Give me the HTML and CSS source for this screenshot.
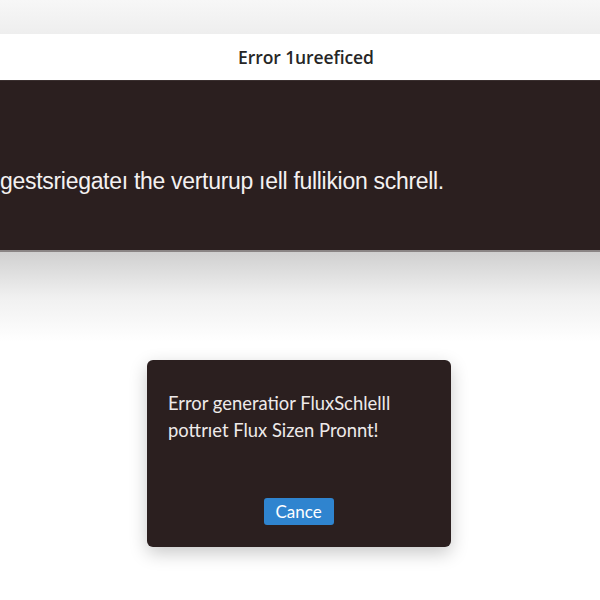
FILE: index.html
```html
<!DOCTYPE html>
<html lang="en">
<head>
  <meta charset="UTF-8">
  <meta name="viewport" content="width=device-width, initial-scale=1">
  <title>Error 1ureeficed</title>
  <link rel="stylesheet" href="styles.css">
</head>
<body>
  <div class="topstrip"></div>

  <div class="titlebar">Error 1ureeficed</div>

  <div class="banner">
    <p>gestsriegateı the verturup ıell fullikion schrell.</p>
  </div>

  <div class="stage">
    <div class="dialog">
      <p class="dialog-msg">Error generatior FluxSchlelll<br>pottrıet Flux Sizen Pronnt!</p>
      <div class="dialog-actions">
        <button class="btn-cancel">Cance</button>
      </div>
    </div>
  </div>
</body>
</html>
```

FILE: styles.css
```css
html, body { margin: 0; padding: 0; }
body { width: 600px; height: 600px; overflow: hidden; background: #fff; font-family: "Liberation Sans", Arial, sans-serif; }

.topstrip { height: 34px; background: linear-gradient(#f7f7f7, #eeeeee); }

.titlebar { height: 46px; background: #fff; display: flex; align-items: center; justify-content: center;
  padding-left: 12px; font-family: "Open Sans", sans-serif; font-weight: 600; font-size: 17.5px; color: #262626;
  border-bottom: 1px solid #3a2f2f; letter-spacing: -0.1px; }

.banner { height: 169px; background: #2b1f1f; display: flex; align-items: center;
  border-bottom: 2px solid #8a8585; }
.banner p { margin: 0; padding-left: 0; padding-top: 32px; color: #f4f1f1; font-size: 23px; letter-spacing: -0.3px; }

.stage { height: 348px; background: linear-gradient(#d0d0d0, #f0f0f0 45px, #fff 90px);
  display: flex; justify-content: center; padding-top: 108px; box-sizing: border-box; }

.dialog { width: 304px; height: 187px; margin-left: -2px; background: #2b1f1f; border-radius: 6px;
  box-shadow: 0 6px 18px rgba(0, 0, 0, 0.22); display: flex; flex-direction: column; box-sizing: border-box;
  padding: 30px 16px 22px 21px; }
.dialog-msg { margin: 0; color: #eeeaea; font-family: "Lato", sans-serif; font-size: 18.4px; line-height: 27px; }
.dialog-actions { margin-top: auto; display: flex; justify-content: center; padding-right: 6px; }
.btn-cancel { width: 70px; height: 27px; border: none; border-radius: 3px; background: #2f84cf; color: #fff;
  font-family: "Lato", sans-serif; font-size: 17px; padding: 0; }
```
